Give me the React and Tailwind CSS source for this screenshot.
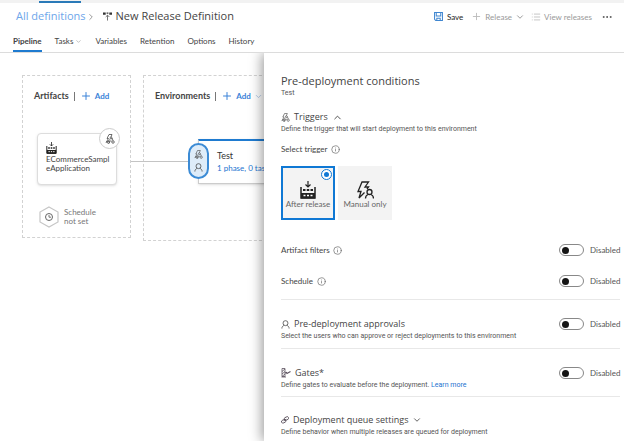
import React from 'react';
import { Plus, ChevronDown, ChevronUp, ChevronRight, List, Ellipsis, Info } from 'lucide-react';

function SaveIcon() {
  return (
    <svg viewBox="0 0 16 16" className="h-[9px] w-[9px] text-[#3f86d0]" fill="none" stroke="currentColor" strokeWidth="1.8">
      <path d="M1 1h14v14H3l-2-2z" />
      <path d="M4 1v6h8V1M5 15v-4h6v4" />
    </svg>
  );
}

function ReleaseIcon() {
  return (
    <svg viewBox="0 0 20 20" className="h-[9px] w-[9px] text-[#333]" fill="none" stroke="currentColor" strokeWidth="2">
      <path d="M0 1h6v5H0zM8 1h4v3H8zM14 1h6v5h-6z" fill="currentColor" stroke="none" />
      <path d="M10 19V7M6 11l4-4 4 4" stroke="#666" />
    </svg>
  );
}

function BuildIcon({ className }) {
  return (
    <svg viewBox="0 0 32 36" className={className} fill="none" stroke="currentColor" strokeWidth="2.4">
      <path d="M16 0v12M11 7l5 5 5-5" />
      <path d="M2 12v22h28V12" strokeWidth="3" />
      <path d="M2 24h28v11H2z" fill="currentColor" stroke="none" />
      <path d="M6 18h5M13.500 18h5M21 18h5" strokeWidth="4" />
      <path d="M7 29h4M14 29h4M21 29h4" stroke="#fff" strokeWidth="3" />
    </svg>
  );
}

function TriggerIcon({ className }) {
  return (
    <svg viewBox="0 0 20 20" className={className} fill="none" stroke="currentColor" strokeWidth="1.4">
      <path d="M12 6l2-5H8L4 9h3L2 17l8-6" />
      <circle cx="12" cy="8" r="2" />
      <path d="M8 18l1-4h4M14 8l2 5" />
      <circle cx="7" cy="17" r="2" />
      <circle cx="16" cy="16" r="2.500" />
    </svg>
  );
}

function PersonIcon({ className }) {
  return (
    <svg viewBox="0 0 20 20" className={className} fill="none" stroke="currentColor" strokeWidth="1.7">
      <circle cx="10" cy="7" r="5.5" />
      <path d="M2 19c0-4 2-6 5-7M18 19c0-4-2-6-5-7" />
    </svg>
  );
}

function ManualIcon() {
  return (
    <svg viewBox="0 0 34 36" className="h-[18px] w-[17px] text-[#222]" fill="none" stroke="currentColor" strokeWidth="2.6">
      <path d="M15 23L4 34l4-13H2L10 2h13l-7 10h7l-3 4" />
      <circle cx="25" cy="22" r="5" />
      <path d="M17 35c0-4 2-7 5-8M33 35c0-4-2-7-5-8" />
    </svg>
  );
}

function GateIcon() {
  return (
    <svg viewBox="0 0 20 20" className="h-[10px] w-[10px] text-[#5d5360]" fill="none" stroke="currentColor" strokeWidth="1.6">
      <path d="M2 1h6v16H2zM2 7l6-5M2 12l6-5M2 17l6-5M1 18h9" />
      <path d="M8 10l3-1 1 2 7-4" strokeWidth="2.400" />
    </svg>
  );
}

function QueueIcon() {
  return (
    <svg viewBox="0 0 20 20" className="h-[8px] w-[8px] text-[#4d4350]" fill="none" stroke="currentColor" strokeWidth="2">
      <rect x="8" y="3" width="11" height="7" rx="3" transform="rotate(-25 13 6)" />
      <rect x="1" y="10" width="11" height="7" rx="3" transform="rotate(-25 6 13)" />
      <path d="M7 12l6-4" />
    </svg>
  );
}

function InfoMark() {
  return <Info className="h-[9px] w-[9px] text-[#666]" strokeWidth={1.8} />;
}

function Toggle({ label }) {
  return (
    <label className="flex h-3 items-center gap-[6px] font-['Lato','Open_Sans',sans-serif] text-[8px] text-[#555]">
      <input
        type="checkbox"
        aria-label={label}
        className="flex h-3 w-[25px] appearance-none items-center rounded-full border border-[#888] bg-white px-[2px] before:h-[7px] before:w-[7px] before:rounded-full before:bg-[#151515] before:content-['']"
      />
      <span className="w-[30px] whitespace-nowrap">Disabled</span>
    </label>
  );
}

function SettingSection({ icon, title, children, toggle, chevron, className }) {
  return (
    <section className={'flex items-start justify-between ' + className}>
      <div>
        <h2 className="flex h-3 items-center gap-1 font-['Open_Sans','Noto_Sans',sans-serif] text-[9px] text-[#444]">
          {icon}
          {title}
          {chevron}
        </h2>
        <p className="h-3 font-['Roboto',sans-serif] text-[7px] leading-3 whitespace-nowrap text-[#555]">{children}</p>
      </div>
      {toggle && <Toggle label={title} />}
    </section>
  );
}

function Header() {
  const tabs = ['Variables', 'Retention', 'Options', 'History'];
  return (
    <header className="border-b border-[#dcdcdc] bg-white">
      <div className="h-[3px] bg-[#f2f2f2] pl-[39px]">
        <div className="h-[3px] w-[42px] border-t border-[#f2f2f2] bg-[#2a7ab8]" />
      </div>
      <div className="flex h-[27px] items-center justify-between pr-[11px] pl-4">
        <div className="flex items-center font-['Open_Sans','Noto_Sans',sans-serif] text-[11px]">
          <a href="#definitions" className="whitespace-nowrap text-[#6ea6ea]">All definitions</a>
          <ChevronRight className="h-[10px] w-[10px] text-[#888]" strokeWidth={2} />
          <span className="mr-1 ml-[7px]"><ReleaseIcon /></span>
          <h1 className="text-[11px] whitespace-nowrap text-[#444]">New Release Definition</h1>
        </div>
        <div className="flex items-center text-[8px] text-[#999]">
          <button className="flex items-center gap-1 text-[#222]"><SaveIcon />Save</button>
          <button className="ml-2 flex items-center gap-[3px]"><Plus className="h-[11px] w-[11px] text-[#bbb]" strokeWidth={2} />Release<ChevronDown className="h-[10px] w-[10px] text-[#888]" /></button>
          <button className="ml-[6px] flex items-center gap-[3px]"><List className="h-[10px] w-[10px] text-[#bbb]" />View releases</button>
          <button aria-label="More" className="ml-[9px]"><Ellipsis className="h-3 w-3 text-[#555]" strokeWidth={2} /></button>
        </div>
      </div>
      <nav className="flex h-[22px] items-stretch gap-[13px] pl-[13px] text-[8px] text-[#444]">
        <a href="#pipeline" className="flex items-center border-t-2 border-b-2 border-t-transparent border-b-[#1f7bd0] font-bold text-[#444]">Pipeline</a>
        <a href="#tasks" className="flex items-center gap-[2px]">Tasks<ChevronDown className="h-[7px] w-[7px] text-[#999]" /></a>
        {tabs.map((t) => (
          <a key={t} href={'#' + t.toLowerCase()} className="flex items-center">{t}</a>
        ))}
      </nav>
    </header>
  );
}

function GroupTitle({ children, chevron }) {
  return (
    <div className="flex h-3 items-center whitespace-nowrap text-[9px]">
      <h2 className="font-bold text-[#444]">{children}</h2>
      <span className="mx-[5px] h-[9px] w-px bg-[#777]" />
      <button className="flex items-center gap-[3px] text-[8px] font-bold text-[#3a82d8]">
        <Plus className="h-[12px] w-[12px]" strokeWidth={2} />
        Add
        {chevron && <ChevronDown className="h-[9px] w-[9px] text-[#9dbbe0]" />}
      </button>
    </div>
  );
}

function Canvas() {
  return (
    <div className="flex w-[264px] shrink-0 items-start gap-3 overflow-hidden pt-[22px] pl-[22px]">
      <section className="h-[163px] w-[109px] shrink-0 border border-dashed border-[#d2d2d2] px-[14px] pt-[14px]">
        <div className="-ml-[3px]"><GroupTitle>Artifacts</GroupTitle></div>
        <div className="relative mt-[31px] h-[52px] w-[80px] rounded-[4px] border border-[#ddd] bg-white px-2 pt-2 shadow">
          <BuildIcon className="h-[12px] w-[11px] text-[#222]" />
          <p className="mt-px text-[8px] leading-[9px] text-[#444]">ECommerceSampl<br />eApplication</p>
          <span className="absolute -top-[6px] -right-[4px] flex h-[21px] w-[21px] items-center justify-center rounded-full border border-[#ccc] bg-white">
            <TriggerIcon className="h-[10px] w-[10px] text-[#333]" />
          </span>
        </div>
        <div className="mt-[21px] flex items-center gap-[5px] pl-[2px]">
          <svg viewBox="0 0 20 22" className="h-[22px] w-[20px]" fill="none" stroke="#c6c6c6" strokeWidth="1.2">
            <path d="M10 1l9 5v10l-9 5-9-5V6z" />
            <circle cx="10" cy="11" r="3.5" stroke="#666" strokeWidth="1" />
            <path d="M10 9v2.2h2" stroke="#666" strokeWidth="0.9" />
          </svg>
          <p className="text-[8px] leading-[9px] text-[#777]">Schedule<br />not set</p>
        </div>
      </section>
      <section className="relative h-[166px] w-[260px] shrink-0 border border-dashed border-[#d2d2d2] pt-[14px]">
        <span className="absolute top-[85px] -left-[13px] h-px w-[58px] bg-[#c4c4c4]" />
        <div className="pl-[11px]"><GroupTitle chevron>Environments</GroupTitle></div>
        <div className="relative mt-[37px] ml-[54px] h-[45px] w-[120px] border border-t-2 border-[#ccc] border-t-[#1f7bd0] bg-white pt-[9px] pl-[18px] shadow">
          <span className="absolute top-[2px] -left-[11px] flex h-[36px] w-[21px] flex-col items-center justify-evenly rounded-full border-2 border-[#3c8bd5] bg-[#deecf9] text-[#444]">
            <TriggerIcon className="h-[9px] w-[9px]" />
            <PersonIcon className="h-[9px] w-[9px]" />
          </span>
          <h3 className="text-[9px] leading-3 text-[#333]">Test</h3>
          <a href="#test" className="block text-[8px] leading-3 whitespace-nowrap text-[#2374d0]">1 phase, 0 tasks</a>
        </div>
      </section>
    </div>
  );
}

function Panel() {
  return (
    <aside className="relative min-w-0 flex-1 bg-white pr-1 pl-[17px] shadow-[-2px_0_12px_rgba(0,0,0,0.4)]">
      <h1 className="pt-5 font-['Open_Sans','Noto_Sans',sans-serif] text-[11px] leading-4 text-[#444]">Pre-deployment conditions</h1>
      <p className="font-['Roboto',sans-serif] text-[7px] leading-2 text-[#555]">Test</p>
      <SettingSection
        className="mt-[14px]"
        title="Triggers"
        icon={<TriggerIcon className="h-[9px] w-[9px]" />}
        chevron={<ChevronUp className="h-[11px] w-[11px]" />}
      >
        Define the trigger that will start deployment to this environment
      </SettingSection>
      <fieldset className="mt-2">
        <legend className="flex h-3 items-center gap-1 text-[8px] text-[#444]">Select trigger <InfoMark /></legend>
        <div className="mt-[11px] flex gap-[3px] text-[8px] text-[#666]">
          <label className="relative flex h-[54px] w-[54px] flex-col items-center border-2 border-[#0f78d4] bg-[#f3f3f3] pt-[13px]">
            <input
              type="radio"
              name="trigger"
              defaultChecked
              className="absolute top-px right-px flex h-[11px] w-[11px] appearance-none items-center justify-center rounded-full border border-[#0f78d4] bg-white before:h-[5px] before:w-[5px] before:rounded-full before:bg-[#0f78d4] before:content-['']"
            />
            <BuildIcon className="h-[18px] w-[16px] text-[#222]" />
            <span className="leading-[11px] whitespace-nowrap">After release</span>
          </label>
          <label className="flex h-[54px] w-[54px] flex-col items-center bg-[#f3f3f3] pt-[15px]">
            <input type="radio" name="trigger" className="sr-only" />
            <ManualIcon />
            <span className="leading-[11px] whitespace-nowrap">Manual only</span>
          </label>
        </div>
      </fieldset>
      <div className="mt-6 flex items-center justify-between text-[8px] text-[#444]">
        <span className="flex items-center gap-[3px]">Artifact filters <InfoMark /></span>
        <Toggle label="Artifact filters" />
      </div>
      <div className="mt-[19px] flex items-center justify-between text-[8px] text-[#444]">
        <span className="flex items-center gap-1">Schedule <InfoMark /></span>
        <Toggle label="Schedule" />
      </div>
      <hr className="mt-3 border-[#e8e8e8]" />
      <SettingSection className="mt-[18px]" title="Pre-deployment approvals" icon={<PersonIcon className="h-[9px] w-[9px]" />} toggle>
        Select the users who can approve or reject deployments to this environment
      </SettingSection>
      <hr className="mt-[6px] border-[#e8e8e8]" />
      <SettingSection className="mt-[18px]" title="Gates*" icon={<GateIcon />} toggle>
        Define gates to evaluate before the deployment. <a href="#learn" className="text-[#2374d0]">Learn more</a>
      </SettingSection>
      <hr className="mt-[5px] border-[#e8e8e8]" />
      <SettingSection
        className="mt-[17px]"
        title="Deployment queue settings"
        icon={<QueueIcon />}
        chevron={<ChevronDown className="h-[10px] w-[10px]" />}
      >
        Define behavior when multiple releases are queued for deployment
      </SettingSection>
    </aside>
  );
}

export default function App() {
  return (
    <div className="flex min-h-screen flex-col overflow-hidden bg-white font-['Lato','Open_Sans',sans-serif]">
      <Header />
      <main className="flex flex-1 overflow-hidden">
        <Canvas />
        <Panel />
      </main>
    </div>
  );
}
